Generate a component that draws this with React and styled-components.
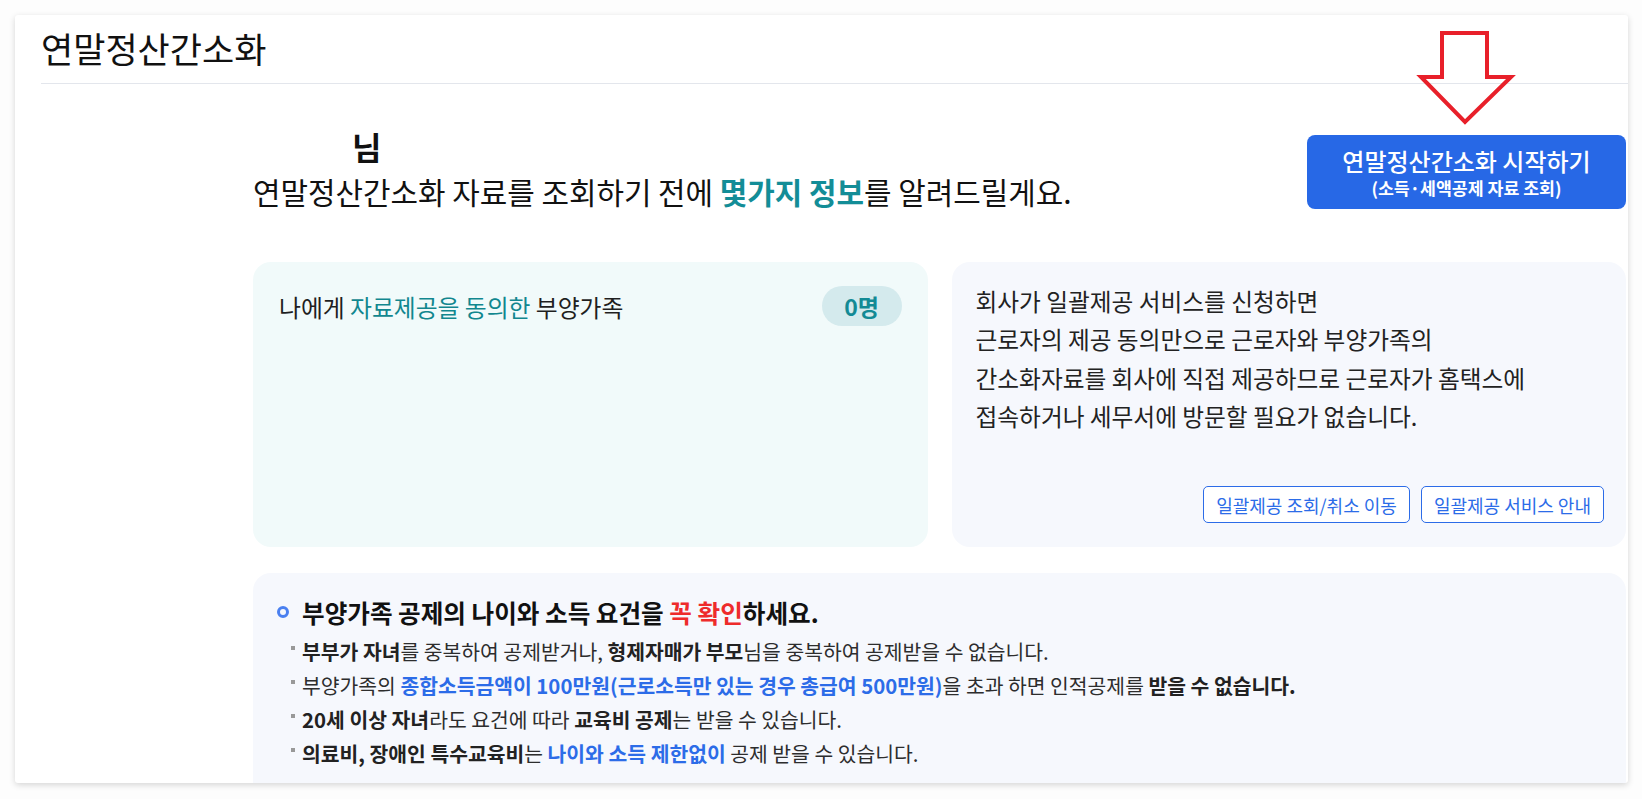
import React from 'react';
import styled, { createGlobalStyle } from 'styled-components';

const GlobalStyle = createGlobalStyle`
  html, body {
    margin: 0;
    padding: 0;
    background: #fdfdfd;
  }
  body {
    font-family: "Noto Sans CJK KR", "Noto Sans", sans-serif;
    color: #222;
  }
  * {
    box-sizing: border-box;
  }
`;

const Page = styled.div`
  padding: 15px 14px 16px 15px;
`;

const Sheet = styled.div`
  height: 768px;
  background: #fff;
  border-radius: 3px;
  box-shadow: 0 2px 6px rgba(0, 0, 0, 0.16);
  overflow: hidden;
`;

const Header = styled.div`
  margin-left: 26px;
  padding: 10px 0 13px;
  border-bottom: 1px solid #e3e6ec;
`;

const Title = styled.h1`
  margin: 0;
  font-size: 35px;
  line-height: 45px;
  font-weight: 400;
  color: #111;
`;

const Content = styled.div`
  padding: 42px 2px 0 238px;
`;

const TopRow = styled.div`
  display: flex;
  justify-content: space-between;
  align-items: flex-end;
`;

const Hello = styled.div`
  display: flex;
  flex-direction: column;
`;

const NameLine = styled.div`
  font-size: 32px;
  line-height: 40px;
  font-weight: 700;
  color: #111;
`;

const NameSlot = styled.span`
  display: inline-block;
  width: 99px;
`;

const Lead = styled.p`
  margin: 5px 0 0;
  font-size: 29.9px;
  line-height: 40px;
  color: #111;
`;

const Teal = styled.span`
  color: ${p => p.$color || '#12878f'};
  font-weight: ${p => (p.$bold ? 700 : 400)};
`;

const ActionBox = styled.div`
  position: relative;
  margin-bottom: 2px;
`;

const ArrowMark = styled.svg`
  position: absolute;
  left: 112px;
  top: -104px;
  width: 94px;
  height: 93px;
  overflow: visible;
`;

const StartButton = styled.button`
  width: 319px;
  height: 74px;
  padding: 0;
  border: 0;
  border-radius: 8px;
  background: #2768e6;
  color: #fff;
  font-family: inherit;
  display: flex;
  flex-direction: column;
  align-items: center;
  justify-content: center;
  cursor: pointer;
`;

const StartMain = styled.span`
  font-size: 24px;
  line-height: 31px;
  font-weight: 500;
`;

const StartSub = styled.span`
  font-size: 17.3px;
  line-height: 23px;
  font-weight: 700;
`;

const CardGrid = styled.div`
  margin-top: 51px;
  display: grid;
  grid-template-columns: 1fr 1fr;
  gap: 24px;
`;

const Panel = styled.div`
  height: 285px;
  border-radius: 18px;
  background: ${p => p.$bg};
  padding: ${p => p.$pad};
  display: flex;
  flex-direction: column;
`;

const PanelHead = styled.div`
  display: flex;
  justify-content: space-between;
  align-items: center;
  font-size: 23.8px;
  line-height: 33px;
  color: #1f1f1f;
`;

const CountPill = styled.span`
  width: 80px;
  height: 40px;
  border-radius: 20px;
  background: #d4eaed;
  color: #138a95;
  font-size: 23px;
  font-weight: 700;
  display: flex;
  align-items: center;
  justify-content: center;
`;

const InfoText = styled.p`
  margin: 0;
  font-size: 23.7px;
  line-height: 38.4px;
  color: #222;
`;

const LinkRow = styled.div`
  margin-top: auto;
  display: flex;
  justify-content: flex-end;
  gap: 11px;
`;

const LinkButton = styled.button`
  height: 37px;
  padding: 0 12px;
  border: 1px solid #2c6ce8;
  border-radius: 5px;
  background: #fff;
  color: #2c6ce8;
  font-family: inherit;
  font-size: 18px;
  cursor: pointer;
`;

const Notes = styled.div`
  margin-top: 26px;
  border-radius: 18px;
  background: #f6f8fd;
  padding: 22px 24px 40px;
`;

const NotesHead = styled.div`
  display: flex;
  align-items: center;
  gap: 13px;
  font-size: 24.6px;
  line-height: 34px;
  font-weight: 700;
  color: #111;
`;

const Ring = styled.span`
  width: 12px;
  height: 12px;
  border-radius: 50%;
  border: 3px solid #4a80f0;
  flex-shrink: 0;
`;

const Red = styled.span`
  color: #ee2b2b;
`;

const NoteList = styled.ul`
  list-style: none;
  margin: 5px 0 0;
  padding: 0 0 0 14px;
`;

const NoteItem = styled.li`
  position: relative;
  padding-left: 11px;
  font-size: 20.4px;
  line-height: 34px;
  color: #2d2d2d;

  &::before {
    content: '';
    position: absolute;
    left: 0;
    top: 12px;
    width: 4px;
    height: 4px;
    background: #999;
  }
`;

const B = styled.b`
  font-weight: 700;
  color: ${p => (p.$blue ? '#2c6ce8' : '#222')};
`;

export default function App() {
  return (
    <>
      <GlobalStyle />
      <Page>
        <Sheet>
          <Header>
            <Title>연말정산간소화</Title>
          </Header>
          <Content>
            <TopRow>
              <Hello>
                <NameLine>
                  <NameSlot />님
                </NameLine>
                <Lead>
                  연말정산간소화 자료를 조회하기 전에 <Teal $bold $color="#138d97">몇가지 정보</Teal>를 알려드릴게요.
                </Lead>
              </Hello>
              <ActionBox>
                <ArrowMark viewBox="0 0 94 93">
                  <polygon
                    points="23,2 68,2 68,46 92,46 46,91 2,46 23,46"
                    fill="none"
                    stroke="#e8202a"
                    strokeWidth="4"
                    strokeLinejoin="miter"
                  />
                </ArrowMark>
                <StartButton>
                  <StartMain>연말정산간소화 시작하기</StartMain>
                  <StartSub>(소득·세액공제 자료 조회)</StartSub>
                </StartButton>
              </ActionBox>
            </TopRow>

            <CardGrid>
              <Panel $bg="#f1fafa" $pad="24px 26px">
                <PanelHead>
                  <span>
                    나에게 <Teal>자료제공을 동의한</Teal> 부양가족
                  </span>
                  <CountPill>0명</CountPill>
                </PanelHead>
              </Panel>
              <Panel $bg="#f6f8fd" $pad="20px 22px 24px 24px">
                <InfoText>
                  회사가 일괄제공 서비스를 신청하면
                  <br />
                  근로자의 제공 동의만으로 근로자와 부양가족의
                  <br />
                  간소화자료를 회사에 직접 제공하므로 근로자가 홈택스에
                  <br />
                  접속하거나 세무서에 방문할 필요가 없습니다.
                </InfoText>
                <LinkRow>
                  <LinkButton>일괄제공 조회/취소 이동</LinkButton>
                  <LinkButton>일괄제공 서비스 안내</LinkButton>
                </LinkRow>
              </Panel>
            </CardGrid>

            <Notes>
              <NotesHead>
                <Ring />
                <span>
                  부양가족 공제의 나이와 소득 요건을 <Red>꼭 확인</Red>하세요.
                </span>
              </NotesHead>
              <NoteList>
                <NoteItem>
                  <B>부부가 자녀</B>를 중복하여 공제받거나, <B>형제자매가 부모</B>님을 중복하여 공제받을 수 없습니다.
                </NoteItem>
                <NoteItem>
                  부양가족의 <B $blue>종합소득금액이 100만원(근로소득만 있는 경우 총급여 500만원)</B>을 초과 하면 인적공제를 <B>받을 수 없습니다.</B>
                </NoteItem>
                <NoteItem>
                  <B>20세 이상 자녀</B>라도 요건에 따라 <B>교육비 공제</B>는 받을 수 있습니다.
                </NoteItem>
                <NoteItem>
                  <B>의료비, 장애인 특수교육비</B>는 <B $blue>나이와 소득 제한없이</B> 공제 받을 수 있습니다.
                </NoteItem>
              </NoteList>
            </Notes>
          </Content>
        </Sheet>
      </Page>
    </>
  );
}
